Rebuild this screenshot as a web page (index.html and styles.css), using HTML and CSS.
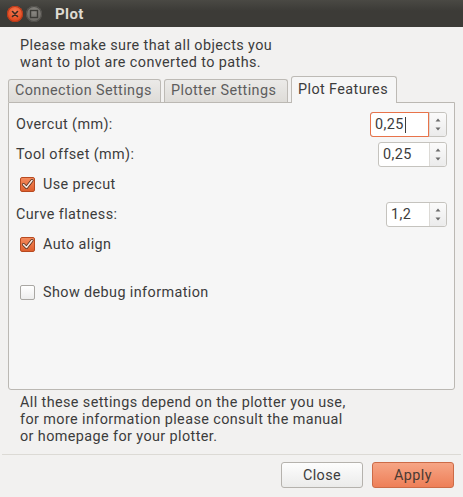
FILE: index.html
```html
<!DOCTYPE html>
<html lang="en">
<head>
    <meta charset="utf-8">
    <title>Plot</title>
    <link rel="stylesheet" href="styles.css">
</head>
<body>
    <div class="window">
        <header class="titlebar">
            <span class="wbtn close">
                <svg width="16" height="16" viewBox="0 0 16 16"><path d="M5.5 5.5l5 5M10.5 5.5l-5 5" stroke="#3a2a22" stroke-width="1.6" stroke-linecap="round"/></svg>
            </span>
            <span class="wbtn maxi">
                <svg width="16" height="16" viewBox="0 0 16 16"><rect x="4.5" y="4.5" width="7" height="7" fill="none" stroke="#3c3b37" stroke-width="1.4"/></svg>
            </span>
            <span class="title">Plot</span>
        </header>

        <main class="content">
            <p class="intro">Please make sure that all objects you<br>want to plot are converted to paths.</p>

            <div class="notebook">
                <div class="tabs">
                    <span class="tab t1">Connection Settings</span>
                    <span class="tab t2">Plotter Settings</span>
                    <span class="tab t3 active">Plot Features</span>
                </div>
                <div class="page">
                    <div class="row">
                        <span>Overcut (mm):</span>
                        <div class="spin focus">
                            <span class="entry w58">0,25<i class="caret"></i></span>
                            <span class="arrows"><svg width="16" height="23" viewBox="0 0 16 23"><path d="M5.5 8.5h5l-2.5-3z M5.5 14.5h5l-2.5 3z" fill="#6b6b6b"/></svg></span>
                        </div>
                    </div>
                    <div class="row">
                        <span>Tool offset (mm):</span>
                        <div class="spin">
                            <span class="entry w51">0,25</span>
                            <span class="arrows"><svg width="16" height="23" viewBox="0 0 16 23"><path d="M5.5 8.5h5l-2.5-3z M5.5 14.5h5l-2.5 3z" fill="#6b6b6b"/></svg></span>
                        </div>
                    </div>
                    <label class="row check">
                        <span class="box on"><svg width="15" height="15" viewBox="0 0 15 15"><path d="M3.5 7.5l3 3 5.5-7" fill="none" stroke="#4a2a1c" stroke-width="3" stroke-linecap="round" stroke-linejoin="round"/><path d="M3.5 7.5l3 3 5.5-7" fill="none" stroke="#fbe9df" stroke-width="1.6" stroke-linecap="round" stroke-linejoin="round"/></svg></span>
                        Use precut
                    </label>
                    <div class="row">
                        <span>Curve flatness:</span>
                        <div class="spin">
                            <span class="entry w43">1,2</span>
                            <span class="arrows"><svg width="16" height="23" viewBox="0 0 16 23"><path d="M5.5 8.5h5l-2.5-3z M5.5 14.5h5l-2.5 3z" fill="#6b6b6b"/></svg></span>
                        </div>
                    </div>
                    <label class="row check">
                        <span class="box on"><svg width="15" height="15" viewBox="0 0 15 15"><path d="M3.5 7.5l3 3 5.5-7" fill="none" stroke="#4a2a1c" stroke-width="3" stroke-linecap="round" stroke-linejoin="round"/><path d="M3.5 7.5l3 3 5.5-7" fill="none" stroke="#fbe9df" stroke-width="1.6" stroke-linecap="round" stroke-linejoin="round"/></svg></span>
                        Auto align
                    </label>
                    <label class="row check spaced">
                        <span class="box"></span>
                        Show debug information
                    </label>
                </div>
            </div>

            <p class="note">All these settings depend on the plotter you use,<br>for more information please consult the manual<br>or homepage for your plotter.</p>
        </main>

        <footer class="actions">
            <button class="btn">Close</button>
            <button class="btn apply">Apply</button>
        </footer>
    </div>
</body>
</html>
```

FILE: styles.css
```css
body {
    margin: 0;
    background-color: #f2f1f0;
    font-family: Roboto, "Noto Sans", sans-serif;
    font-size: 14.4px;
    letter-spacing: 0.4px;
    color: #3c3c3c;
}

.window {
    width: 463px;
    height: 497px;
    display: flex;
    flex-direction: column;
}

/* title bar */

.titlebar {
    height: 27px;
    flex: none;
    display: flex;
    align-items: center;
    padding-left: 7px;
    background: linear-gradient(#4a4944, #3c3b37 40%);
}

.wbtn {
    width: 16px;
    height: 16px;
    border-radius: 50%;
    margin-right: 3px;
}

.wbtn svg {
    display: block;
}

.close {
    background: radial-gradient(circle at 50% 35%, #f77b52, #e0481d 70%);
    box-shadow: inset 0 0 0 1px #b8391a;
}

.maxi {
    background: radial-gradient(circle at 50% 35%, #8a8883, #6c6a65 70%);
    box-shadow: inset 0 0 0 1px #4f4e4a;
}

.title {
    margin-left: 10px;
    font-weight: bold;
    font-size: 15px;
    color: #dfdbd2;
}

/* main area */

.content {
    flex: 1;
    padding: 0 8px;
}

.intro,
.note {
    margin: 0 0 0 12px;
    line-height: 17px;
}

.intro {
    margin-top: 10px;
    margin-bottom: 5px;
}

.note {
    margin-top: 4px;
}

.tabs {
    display: flex;
    align-items: flex-end;
    gap: 3px;
    height: 26px;
}

.tab {
    box-sizing: border-box;
    height: 23px;
    line-height: 22px;
    padding: 0 6px;
    border: 1px solid #bdbab5;
    border-bottom: none;
    border-radius: 3px 3px 0 0;
    background: linear-gradient(#ebeae8, #dedcd8);
    color: #5d5d5d;
    white-space: nowrap;
}

.t1 { width: 153px; }
.t2 { width: 124px; }
.t3 { width: 106px; }

.tab.active {
    position: relative;
    z-index: 1;
    height: 27px;
    line-height: 26px;
    margin-bottom: -1px;
    background: #f6f6f6;
    color: #3c3c3c;
}

.page {
    height: 268px;
    padding: 9px 7px 9px 7px;
    border: 1px solid #bbb8b3;
    border-radius: 0 0 3px 3px;
    background-color: #f6f6f6;
    display: flex;
    flex-direction: column;
    gap: 5px;
}

.row {
    height: 25px;
    display: flex;
    align-items: center;
    justify-content: space-between;
}

.row.check {
    justify-content: flex-start;
    padding-left: 4px;
}

.row.spaced {
    margin-top: 18px;
}

.box {
    width: 13px;
    height: 13px;
    margin-right: 8px;
    border: 1px solid #a9a7a3;
    border-radius: 2px;
    background: linear-gradient(#ffffff, #ededed);
}

.box svg {
    display: block;
    margin: -1px;
}

.box.on {
    border-color: #b84a20;
    background: linear-gradient(#f38a5c, #de5f2e);
}

/* spin buttons */

.spin {
    display: flex;
    height: 25px;
    box-sizing: border-box;
    border: 1px solid #c5c3be;
    border-radius: 3px;
    background: #fff;
}

.entry {
    display: flex;
    align-items: center;
    padding-left: 4px;
    box-sizing: border-box;
    color: #3c3c3c;
}

.w58 { width: 57px; }
.w51 { width: 50px; }
.w43 { width: 42px; }

.spin.focus .entry {
    margin: -1px 0 -1px -1px;
    width: 59px;
    border: 1px solid #e8734a;
    border-radius: 3px 0 0 3px;
    padding-left: 4px;
}

.caret {
    width: 1px;
    height: 16px;
    margin-left: 1px;
    background: #3c3c3c;
}

.arrows {
    width: 16px;
    border-left: 1px solid #dcdad6;
    border-radius: 0 3px 3px 0;
    background: linear-gradient(#fbfbfb, #ebebeb);
}

.arrows svg {
    display: block;
}

/* buttons */

.actions {
    flex: none;
    height: 35px;
    margin: 0 2px;
    border-top: 1px solid #dcdad5;
    display: flex;
    justify-content: flex-end;
    align-items: flex-start;
    gap: 9px;
    padding: 7px 7px 0 0;
}

.btn {
    width: 82px;
    height: 26px;
    font: inherit;
    letter-spacing: inherit;
    color: #3c3c3c;
    border: 1px solid #b5b2ad;
    border-radius: 3px;
    background: linear-gradient(#fdfdfd, #ebebea);
}

.btn.apply {
    border-color: #cc6b47;
    background: linear-gradient(#f6a585, #ee7f58);
    color: #4a3a33;
}
```
